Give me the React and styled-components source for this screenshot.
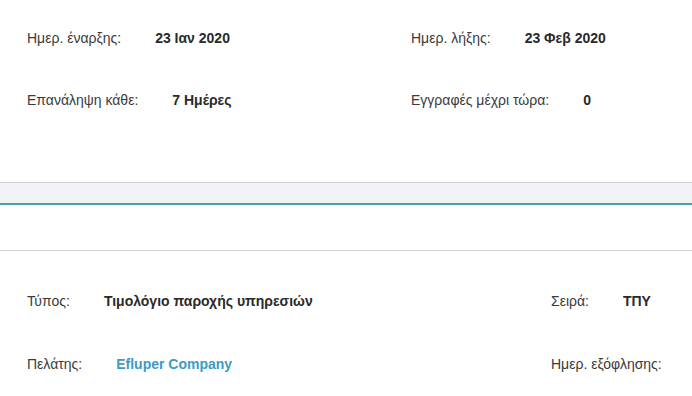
import React from 'react';
import styled, { createGlobalStyle } from 'styled-components';

const GlobalStyle = createGlobalStyle`
    html, body {
        margin: 0;
        padding: 0;
        background: #ffffff;
    }
    body {
        font-family: "Liberation Sans", Arial, sans-serif;
        font-size: 14px;
        color: #333333;
        overflow: hidden;
    }
`;

const topFields = [
    [
        { label: 'Ημερ. έναρξης:', value: '23 Ιαν 2020' },
        { label: 'Ημερ. λήξης:', value: '23 Φεβ 2020' },
    ],
    [
        { label: 'Επανάληψη κάθε:', value: '7 Ημέρες' },
        { label: 'Εγγραφές μέχρι τώρα:', value: '0' },
    ],
];

const bottomFields = [
    [
        { label: 'Τύπος:', value: 'Τιμολόγιο παροχής υπηρεσιών' },
        { label: 'Σειρά:', value: 'ΤΠΥ' },
    ],
    [
        { label: 'Πελάτης:', value: 'Efluper Company', link: true },
        { label: 'Ημερ. εξόφλησης:', value: '' },
    ],
];

const Field = ({ label, value, link }) => (
    <StyledField>
        <span className="label">{label}</span>
        {value && <Value $link={link}>{value}</Value>}
    </StyledField>
);

const App = () => {
    return (
        <>
            <GlobalStyle />
            <Page>
                <Section $top="28px" $bottom="72px" $gap="42px" $col="384px">
                    {topFields.flat().map(f => <Field key={f.label} {...f} />)}
                </Section>
                <Band />
                <TabStrip />
                <Section $top="40px" $bottom="20px" $gap="43px" $col="524px">
                    {bottomFields.flat().map(f => <Field key={f.label} {...f} />)}
                </Section>
            </Page>
        </>
    );
};

const Page = styled.div`
    width: 692px;
    height: 396px;
    overflow: hidden;
`;

const Section = styled.section`
    display: grid;
    grid-template-columns: ${props => props.$col} 1fr;
    row-gap: ${props => props.$gap};
    padding: ${props => props.$top} 0 ${props => props.$bottom} 27px;
`;

const StyledField = styled.div`
    display: flex;
    align-items: center;
    height: 20px;
    line-height: 20px;
    white-space: nowrap;
    overflow: hidden;

    &>.label{
        color: #3a3a3a;
        margin-right: 34px;
    }
`;

const Value = styled.span`
    font-weight: bold;
    color: ${props => props.$link ? '#3c9bc3' : '#2a2a2a'};
`;

const Band = styled.div`
    height: 20px;
    background-color: #f2f3f7;
    border-top: 1px solid #cfcfcf;
    border-bottom: 2px solid #4a9fb2;
`;

const TabStrip = styled.div`
    height: 45px;
    background-color: #ffffff;
    border-bottom: 1px solid #d0d0d0;
`;

export default App;
